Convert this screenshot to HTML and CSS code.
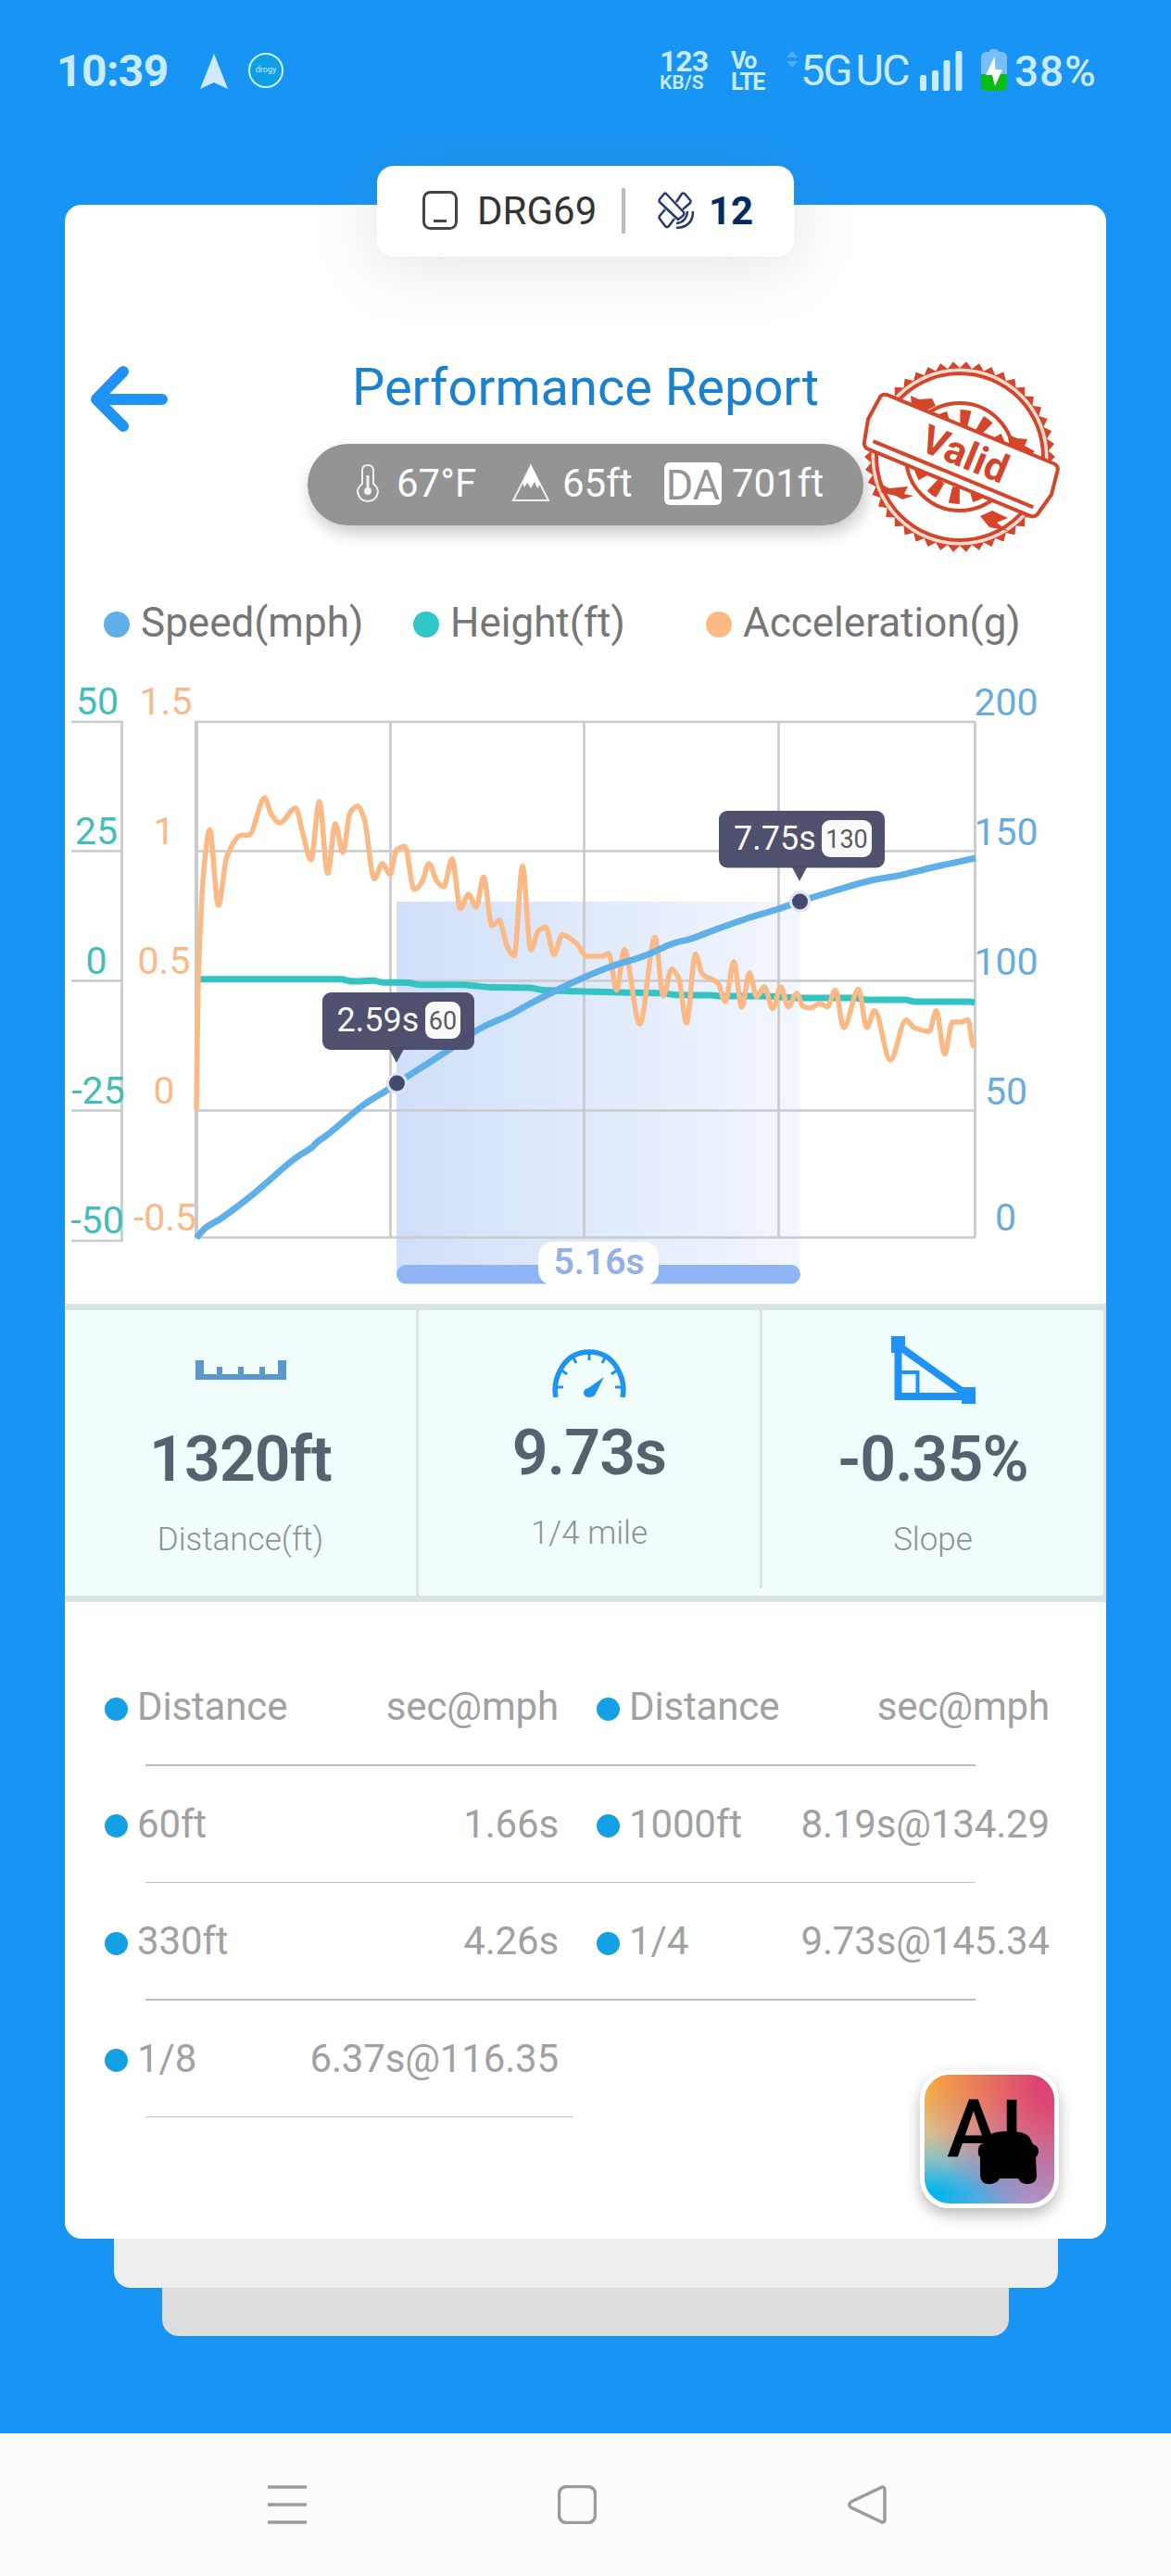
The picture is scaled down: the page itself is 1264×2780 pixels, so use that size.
FILE: index.html
```html
<!DOCTYPE html>
<html lang="en">
<head>
    <meta charset="UTF-8">
    <meta name="viewport" content="width=device-width, initial-scale=1.0">
    <title>Performance Report</title>
    <link rel="stylesheet" href="styles.css">
</head>
<body>
    <div class="status-bar">
        <span class="clock">10:39</span>
        <svg class="location" width="30" height="38" viewBox="0 0 30 38"><path d="M15 0L30 38L15 31L0 38Z" fill="#d2eafd"/></svg>
        <span class="app-badge">drogy</span>
        <span class="net-speed"><b>123</b><small>KB/S</small></span>
        <span class="volte"><b>Vo</b><b>LTE</b></span>
        <svg class="data-arrows" width="12" height="18" viewBox="0 0 12 18"><path d="M6 0L12 7H0ZM6 18L12 11H0Z" fill="#4fb0fa"/></svg>
        <span class="network">5G<span>UC</span></span>
        <svg class="signal" width="46" height="43" viewBox="0 0 46 43" fill="#c9ebff">
            <rect x="0" y="26" width="7" height="17" rx="2"/>
            <rect x="13" y="21" width="7" height="22" rx="2"/>
            <rect x="25.500" y="10" width="7" height="33" rx="2"/>
            <rect x="38.500" y="0" width="7" height="43" rx="2"/>
        </svg>
        <svg class="battery" width="28" height="45" viewBox="0 0 28 45">
            <path d="M9 3Q9 0 12 0H16Q19 0 19 3H22Q28 3 28 9V27H0V9Q0 3 6 3Z" fill="#78befb"/>
            <path d="M0 27H28V39Q28 45 22 45H6Q0 45 0 39Z" fill="#08bd16"/>
            <path d="M14.500 8L5 28H12L15 40L23 22H15.500Z" fill="#fff"/>
        </svg>
        <span class="percent">38%</span>
    </div>

    <main class="card">
        <div class="device">
            <svg width="38" height="42" viewBox="0 0 38 42" fill="none" stroke="#444" stroke-width="3">
                <rect x="1.500" y="1.500" width="35" height="39" rx="7"/>
                <path d="M12 32.500H26"/>
            </svg>
            <span class="device-name">DRG69</span>
            <i class="divider"></i>
            <svg width="39" height="40" viewBox="0 0 39 40" fill="none" stroke="#26396b" stroke-width="2.500" stroke-linejoin="round">
                <path d="M9 2L28 22Q29 24 27 26L22 30L2 11Q1 10 2 8L7 2Q8 1 9 2Z"/>
                <path d="M20 11L26 2Q27 1 29 2L35 9Q36 10 35 12L27 19"/>
                <path d="M8 19L2 26Q1 28 2 29L8 37Q10 39 12 37L18 29"/>
                <path d="M32 21Q31 33 20 34M38 21Q38 38 20 39"/>
            </svg>
            <span class="satellites">12</span>
        </div>

        <header class="head">
            <svg class="back" width="86" height="72" viewBox="0 0 86 72" fill="none" stroke="#1f93f5" stroke-width="12" stroke-linecap="round" stroke-linejoin="round">
                <path d="M37 6L8 36L37 65M8 36H79"/>
            </svg>
            <div class="head-center">
                <h1>Performance Report</h1>
                <div class="conditions">
                    <svg class="thermo" width="24" height="41" viewBox="0 0 24 41" fill="none" stroke="#f0f0f0" stroke-width="2">
                        <path d="M6 21V7Q6 1 12 1Q18 1 18 7V21Q23 25 23 30Q21 40 12 40Q3 40 1 30Q1 25 6 21Z"/>
                        <path d="M12 12V30" stroke-width="3"/>
                        <circle cx="12" cy="29" r="4" fill="#f0f0f0" stroke="none"/>
                    </svg>
                    <span class="temp">67°F</span>
                    <svg class="mountain" width="42" height="42" viewBox="0 0 42 42">
                        <path d="M21 3L40 40H2Z" fill="none" stroke="#f0f0f0" stroke-width="2"/>
                        <path d="M21 1L31 23L28 27L25 20L21 27L17 21L14 26L12 21Z" fill="#fff"/>
                    </svg>
                    <span class="altitude">65ft</span>
                    <span class="da">DA</span>
                    <span class="density">701ft</span>
                </div>
            </div>
            <svg class="stamp" width="214" height="210" viewBox="-106 -105 214 210">
                <polygon id="stampTeeth" fill="#d4452a"/>
                <circle r="94" fill="#fff" stroke="#fbd9cf" stroke-width="3"/>
                <circle r="90" fill="none" stroke="#d4452a" stroke-width="4"/>
                <circle r="58" fill="none" stroke="#d4452a" stroke-width="4"/>
                <circle r="42" fill="none" stroke="#d4452a" stroke-width="18" stroke-dasharray="10 12"/>
                <path d="M-53 -66L-44 -62L-30 -63L-26 -55L-36 -50L-52 -56ZM52 -24L62 -20L73 -19L70 -12L81 -6L70 3L54 -4ZM-88 28L-76 34L-56 32L-60 40L-50 42L-62 46L-69 42L-84 39ZM22 64L35 58L52 66L40 71L52 80L32 76Z" fill="#d4452a"/>
                <g transform="rotate(22.4)">
                    <path d="M-104 -28Q-102 -32 -96 -32H96Q101 -32 103 -28L107 0L101 26Q99 30 94 30H-94Q-99 30 -101 26L-107 0Z" fill="#fff" stroke="#d4452a" stroke-width="4"/>
                    <path d="M-93 20H94" stroke="#d4452a" stroke-width="4"/>
                    <text x="4" y="10" class="stamp-text">Valid</text>
                </g>
            </svg>
        </header>

        <div class="legend">
            <span class="speed">Speed(mph)</span>
            <span class="height">Height(ft)</span>
            <span class="accel">Acceleration(g)</span>
        </div>

        <svg class="chart" width="1124" height="710" viewBox="70 697 1124 710">
            <defs>
                <linearGradient id="range">
                    <stop offset="0" stop-color="#d0dff8"/>
                    <stop offset="1" stop-color="#f2f6ff"/>
                </linearGradient>
            </defs>
            <rect x="428" y="973" width="435.500" height="400" fill="url(#range)"/>
            <path class="grid" d="M77 779H133M77 918.500H131M77 1058.500H131M77 1198.500H131M77 1339H133M131.500 779V1339M210 779H1053M212 918.500H1052M212 1058.500H1052M212 1198.500H1052M210 1335.500H1053M421.500 779V1335M630.500 779V1335M840.500 779V1335M1052.500 779V1335"/>
            <path class="grid thick" d="M212 778V1336"/>
            <path id="heightLine" class="line" stroke="#34c3c3"/>
            <path id="accelLine" class="line thin" stroke="#fab985"/>
            <path id="speedLine" class="line" stroke="#5fafe9"/>

            <g class="ticks ticks-height">
                <text x="105" y="771">50</text>
                <text x="104" y="911">25</text>
                <text x="104" y="1051">0</text>
                <text x="106" y="1191">-25</text>
                <text x="105" y="1331">-50</text>
            </g>
            <g class="ticks ticks-accel">
                <text x="179" y="771">1.5</text>
                <text x="177" y="911">1</text>
                <text x="177" y="1051">0.5</text>
                <text x="177" y="1191">0</text>
                <text x="178" y="1328">-0.5</text>
            </g>
            <g class="ticks ticks-speed">
                <text x="1086" y="771.500">200</text>
                <text x="1086" y="911.500">150</text>
                <text x="1086" y="1052">100</text>
                <text x="1086" y="1192">50</text>
                <text x="1085.500" y="1328">0</text>
            </g>

            <rect x="428" y="1365" width="436" height="20.500" rx="10" fill="#8fb4f6"/>
            <rect x="581" y="1340" width="130" height="47" rx="16" fill="#fff"/>
            <text class="range-text" x="646.500" y="1374.500">5.16s</text>

            <g class="marker">
                <rect x="348" y="1071" width="164" height="62" rx="9"/>
                <path d="M419 1130H437L428 1147Z"/>
                <circle cx="428.500" cy="1169" r="10"/>
                <text class="marker-time" x="408" y="1113">2.59s</text>
                <rect class="marker-badge" x="459" y="1081" width="38" height="40" rx="9"/>
                <text class="marker-speed" x="478" y="1110.500">60</text>
            </g>
            <g class="marker">
                <rect x="776" y="875" width="179" height="61.500" rx="9"/>
                <path d="M854 934H872L863 951Z"/>
                <circle cx="863.500" cy="973" r="10"/>
                <text class="marker-time" x="836.500" y="917">7.75s</text>
                <rect class="marker-badge" x="887" y="885" width="54" height="40" rx="9"/>
                <text class="marker-speed" x="914" y="914.500">130</text>
            </g>
        </svg>

        <section class="stats">
            <div class="stat stat-distance">
                <svg width="98" height="21" viewBox="0 0 98 21"><path d="M0 0H9V15H23V7H29V15H46V7H52V15H69V7H75V15H89V0H98V21H0Z" fill="#5b97ce"/></svg>
                <strong>1320ft</strong>
                <span>Distance(ft)</span>
            </div>
            <div class="stat stat-time">
                <svg width="80" height="52" viewBox="0 0 80 52" fill="none" stroke="#1f93f0">
                    <path d="M4 52Q1 38 8 24Q18 3 40 3Q62 3 72 24Q79 38 76 52" stroke-width="5.500"/>
                    <path d="M5 41H12M9 22L16 27M22 8L26 15M40 3V12M58 8L54 15M71 22L64 27M75 41H68" stroke-width="3"/>
                    <path d="M56 30L46 50Q44 52 40 52Q34 52 34 47Q34 43 39 42Z" fill="#1f93f0" stroke="none"/>
                </svg>
                <strong>9.73s</strong>
                <span>1/4 mile</span>
            </div>
            <div class="stat stat-slope">
                <svg width="91" height="73" viewBox="0 0 91 73" fill="none" stroke="#1f93f5">
                    <path d="M7.500 10V65H84Z" stroke-width="8"/>
                    <path d="M8 39H28.500V65" stroke-width="4"/>
                    <path d="M0 0H15V18H0ZM76 55H91V73H76Z" fill="#1f93f5" stroke="none"/>
                </svg>
                <strong>-0.35%</strong>
                <span>Slope</span>
            </div>
        </section>

        <section class="splits">
            <div class="row">
                <div class="split"><span>Distance</span><span>sec@mph</span></div>
                <div class="split"><span>Distance</span><span>sec@mph</span></div>
            </div>
            <div class="row">
                <div class="split"><span>60ft</span><span>1.66s</span></div>
                <div class="split"><span>1000ft</span><span>8.19s@134.29</span></div>
            </div>
            <div class="row">
                <div class="split"><span>330ft</span><span>4.26s</span></div>
                <div class="split"><span>1/4</span><span>9.73s@145.34</span></div>
            </div>
            <div class="row half">
                <div class="split"><span>1/8</span><span>6.37s@116.35</span></div>
            </div>
        </section>

        <div class="ai-button">
            <svg width="140" height="140" viewBox="0 0 140 140">
                <text x="24" y="89" font-size="87" font-weight="500">AI</text>
                <path d="M58 81Q58 75 64 74L70 65Q75 61 91 61Q108 61 113 67L117 75Q123 77 123 82Q123 87 120 89L121 110Q120 118 111 118Q104 118 101 112H81Q78 118 69 118Q61 118 60 109V89Q57 86 58 81Z"/>
            </svg>
        </div>
    </main>
    <div class="sheet sheet-middle"></div>
    <div class="sheet sheet-last"></div>

    <nav class="nav-bar">
        <svg width="42" height="42" viewBox="0 0 42 42"><path d="M0 2H42M0 21H42M0 40H42"/></svg>
        <svg width="42" height="42" viewBox="0 0 42 42"><rect x="1.500" y="1.500" width="39" height="39" rx="8"/></svg>
        <svg width="42" height="42" viewBox="0 0 42 42"><path d="M36 2.500L3.500 18Q0 21 3.500 24L36 39.500Q40 41 40 37V5Q40 1 36 2.500Z"/></svg>
    </nav>
    <script src="chart.js"></script>
</body>
</html>
```
FILE: styles.css
```css
* {
    box-sizing: border-box;
}
body {
    margin: 0;
    min-height: 2780px;
    display: flex;
    flex-direction: column;
    align-items: center;
    background-color: #1894f5;
    font-family: Roboto, sans-serif;
}
svg {
    display: block;
    flex: none;
}

/* status bar */
.status-bar {
    width: 100%;
    height: 221px;
    padding: 50px 0 0 61px;
    display: flex;
    align-items: flex-start;
    color: #c9ebff;
    white-space: nowrap;
}
.clock {
    width: 155px;
    font-size: 48px;
    line-height: 53px;
    font-weight: 700;
    letter-spacing: -0.6px;
}
.location {
    margin-top: 8px;
}
.app-badge {
    width: 38px;
    height: 38px;
    margin: 7px 406px 0 22px;
    border: 2px solid #c9f5ff;
    border-radius: 50%;
    background-color: #0f9fe4;
    font-size: 9px;
    line-height: 33px;
    text-align: center;
}
.net-speed, .volte {
    display: flex;
    flex-direction: column;
}
.net-speed {
    width: 77px;
}
.net-speed b {
    font-size: 32px;
    line-height: 32px;
    font-weight: 700;
    letter-spacing: -1px;
}
.net-speed small {
    font-size: 21px;
    line-height: 15px;
    font-weight: 600;
}
.volte {
    width: 60px;
    padding-top: 4px;
}
.volte b {
    font-size: 25px;
    line-height: 23px;
    letter-spacing: -1.5px;
}
.data-arrows {
    margin-top: 5px;
}
.network {
    width: 132px;
    padding-left: 3px;
    font-size: 47px;
    line-height: 52px;
    letter-spacing: -2px;
}
.network span {
    margin-left: 5px;
}
.signal {
    margin-top: 5px;
}
.battery {
    margin: 3px 8px 0 20px;
}
.percent {
    font-size: 46px;
    line-height: 54px;
    font-weight: 500;
    letter-spacing: 0.8px;
}

/* report card */
.card {
    position: relative;
    width: 1124px;
    height: 2195px;
    background-color: #fff;
    border-radius: 18px;
}
.device {
    position: absolute;
    top: -42px;
    left: 337px;
    width: 450px;
    height: 98px;
    padding: 0 0 2px 49px;
    display: flex;
    align-items: center;
    background-color: #fff;
    border-radius: 18px;
    box-shadow: 0 8px 70px rgba(90, 110, 130, 0.2);
    font-size: 42px;
    color: #333;
}
.device-name {
    width: 154px;
    margin-left: 21px;
}
.divider {
    width: 4px;
    height: 49px;
    margin: 0 35px 0 2px;
    background-color: #bbb;
}
.satellites {
    margin-left: 16px;
    font-weight: 700;
    color: #042a62;
}
.head {
    height: 426px;
    padding-top: 164px;
    display: grid;
    grid-template-columns: 262px 600px 262px;
    align-items: start;
}
.back {
    margin: 10px 0 0 26px;
}
.stamp {
    margin: 3px 0 0 -2px;
    z-index: 1;
}
.stamp-text {
    font-size: 43px;
    font-weight: 700;
    fill: #d4452a;
    text-anchor: middle;
}
h1 {
    margin: 0 0 28px;
    font-size: 56px;
    line-height: 66px;
    font-weight: 400;
    text-align: center;
    color: #1a80d0;
}
.conditions {
    height: 88px;
    padding: 0 0 4px 53px;
    display: flex;
    align-items: center;
    background-color: #949494;
    border-radius: 44px;
    box-shadow: 3px 8px 18px rgba(0, 0, 0, 0.22);
    font-size: 42px;
    color: #fff;
}
.temp {
    width: 124px;
    margin-left: 19px;
}
.altitude {
    width: 110px;
    margin-left: 13px;
}
.da {
    width: 62px;
    height: 46px;
    margin-top: 2px;
    border-radius: 6px;
    background-color: #fff;
    color: #949494;
    font-size: 45px;
    line-height: 50px;
    text-align: center;
}
.density {
    margin-left: 11px;
}

.legend {
    height: 50px;
    padding-left: 42px;
    display: grid;
    grid-template-columns: 334px 316px auto;
    font-size: 44px;
    line-height: 50px;
    color: #767676;
}
.legend span {
    display: flex;
    align-items: center;
    gap: 12px;
}
.legend span::before {
    content: "";
    width: 28px;
    height: 28px;
    margin-top: 3px;
    border-radius: 50%;
    background-color: #5fafe9;
}
.legend .height::before {
    background-color: #2fc7c7;
}
.legend .accel::before {
    background-color: #fdb884;
}

/* chart */
.grid {
    fill: none;
    stroke: #c9cacb;
    stroke-width: 2.7;
}
.grid.thick {
    stroke-width: 4;
}
.line {
    fill: none;
    stroke-width: 7;
    stroke-linejoin: round;
}
.line.thin {
    stroke-width: 5.5;
}
.ticks text {
    font-size: 41px;
    text-anchor: middle;
}
.ticks-height {
    fill: #43bdb8;
}
.ticks-accel {
    fill: #f8ba88;
}
.ticks-speed {
    fill: #68acdd;
}
.range-text {
    font-size: 39px;
    font-weight: 600;
    text-anchor: middle;
    fill: #92b0ea;
}
.marker {
    fill: #4a4a6a;
    fill-opacity: 0.97;
}
.marker circle {
    fill: #41456b;
    stroke: #dfe4f0;
    stroke-width: 3;
}
.marker text {
    text-anchor: middle;
}
.marker .marker-time {
    font-size: 36px;
    fill: #fff;
}
.marker .marker-badge {
    fill: #fff;
}
.marker .marker-speed {
    font-size: 27px;
    fill: #555;
}

/* summary */
.stats {
    height: 322px;
    display: grid;
    grid-template-columns: 382px 371px 371px;
    background-color: #f1fdfd;
    border: solid #dae4e3;
    border-width: 7px 0;
}
.stat {
    display: flex;
    flex-direction: column;
    align-items: center;
    border-right: 3px solid #dae4e3;
}
.stat strong {
    margin-bottom: 26px;
    font-size: 68px;
    line-height: 80px;
    font-weight: 600;
    letter-spacing: -0.9px;
    color: #556270;
}
.stat span {
    font-size: 35px;
    line-height: 42px;
    font-weight: 300;
    color: #8c9292;
}
.stat-distance {
    padding-top: 54px;
}
.stat-distance svg {
    margin-bottom: 46px;
}
.stat-time {
    padding-top: 42px;
    margin-bottom: 8px;
}
.stat-slope {
    padding-top: 28px;
}
.stat-time svg, .stat-slope svg {
    margin-bottom: 20px;
}

/* split times */
.splits {
    padding-top: 50px;
    font-size: 42px;
    line-height: 50px;
    letter-spacing: -0.15px;
    color: #a1a1a1;
}
.row {
    height: 126.5px;
    padding: 38px 0 0 43px;
    display: grid;
    grid-template-columns: 490px 489px;
    grid-template-rows: 50px 1.5px;
    gap: 37px 41px;
}
.row::after {
    content: "";
    grid-row: 2;
    grid-column: 1 / 3;
    width: 896px;
    margin-left: 44px;
    background-color: #bdbdbd;
}
.row.half::after {
    width: 461px;
}
.split {
    display: flex;
    align-items: center;
}
.split::before {
    content: "";
    width: 25px;
    height: 25px;
    margin: 4px 10px 0 0;
    border-radius: 50%;
    background-color: #14a0e5;
}
.split span:last-child {
    margin-left: auto;
}

.ai-button {
    position: absolute;
    right: 51px;
    bottom: 33px;
    width: 150px;
    height: 149px;
    border: 5px solid #fff;
    border-radius: 32px;
    background:
        radial-gradient(circle at 100% 10%, #dc4573 12%, rgba(220, 69, 115, 0) 75%),
        radial-gradient(circle at 105% 105%, #a3a2d6 20%, rgba(163, 162, 214, 0) 65%),
        linear-gradient(#f8b03f 12%, #d8c08e 45%, #8dbfc4 65%, #00b5ee 88%);
    background-origin: border-box;
    box-shadow: 0 7px 16px rgba(0, 0, 0, 0.28);
}

.sheet {
    border-radius: 0 0 18px 18px;
}
.sheet-middle {
    width: 1019px;
    height: 53px;
    background-color: #eee;
}
.sheet-last {
    width: 914px;
    height: 52px;
    background-color: #ddd;
}

.nav-bar {
    width: 100%;
    height: 154px;
    margin-top: auto;
    padding: 56px 0 0 289px;
    display: flex;
    gap: 271px;
    background-color: #fcfcfc;
}
.nav-bar svg {
    fill: none;
    stroke: #9b9b9b;
    stroke-width: 3.5;
}
```
FILE: chart.js
```js
const speed = [
    [212, 1336], [222, 1325], [237, 1316], [273, 1289], [320, 1249], [337, 1238], [343, 1232], [353, 1225],
    [393, 1192], [420, 1175], [428, 1169], [440, 1161.5], [483, 1134], [520, 1109], [553, 1094], [567, 1086],
    [600, 1069], [630, 1055], [657, 1044], [697, 1031], [730, 1017], [743, 1014], [773, 1003], [807, 991],
    [840, 981], [863, 973], [900, 961.5], [943, 949.5], [967, 945.5], [1007, 936], [1053, 926]
];
const height = [
    [212, 1056.7], [368, 1056.7], [380, 1059], [403, 1058.3], [413, 1060.2], [440, 1060.5], [453, 1062.7],
    [498, 1062.7], [530, 1065.6], [572, 1066], [587, 1068.6], [622, 1069.7], [670, 1071], [717, 1072],
    [730, 1073.8], [768, 1074], [777, 1075], [823, 1075], [863, 1077], [923, 1077], [935, 1079], [978, 1079],
    [987, 1081], [1047, 1081], [1052, 1082]
];
const accel = [
    [212, 1198], [214, 1058], [220.7, 932], [226.3, 895.5], [235.7, 977], [245, 924], [260, 901.6], [269, 901],
    [285.7, 861], [293, 879], [302, 888], [319, 872], [327, 900], [335.7, 928], [344.7, 865], [353.7, 942.5],
    [362, 889], [370, 920], [378, 877], [385.7, 870], [393, 883], [404, 948.5], [412.7, 932], [421, 943.7],
    [428, 917], [437, 913.5], [447, 960], [455, 953], [463, 932], [471.7, 951], [479, 957], [488, 927],
    [497, 980.5], [505.7, 965], [514, 979], [522, 946.5], [531, 999], [539, 993], [547, 1020], [555, 1031.6],
    [564, 934.7], [573, 1025], [581, 1005], [589, 1000.5], [598, 1030], [607, 1008.7], [622, 1018], [633, 1032],
    [650, 1032], [657, 1029], [665.7, 1068.6], [673.7, 1024.6], [690.7, 1105], [707, 1011.6], [716, 1075],
    [725, 1045.7], [733, 1057], [741, 1104], [750.7, 1029.8], [758, 1051], [775, 1061], [783, 1081], [792, 1038],
    [800.7, 1087], [809, 1050], [816.7, 1075.6], [825, 1064.7], [834, 1088.6], [842.7, 1065], [851, 1086.4],
    [860, 1072], [866.7, 1086], [875, 1087.7], [885, 1083], [893, 1086.4], [901.7, 1068.6], [910.7, 1109],
    [926.7, 1067.8], [935.7, 1109], [944, 1090.8], [961, 1144], [978, 1100.7], [986.7, 1109], [1003, 1113],
    [1010.7, 1090.8], [1019.7, 1137.6], [1028, 1103], [1037, 1103], [1045, 1100.7], [1050, 1127.6], [1052, 1130]
];

// monotone curve, so peaks do not overshoot
function smoothPath(points) {
    const slopes = points.map((p, i) => {
        if (i === 0 || i === points.length - 1) return null;
        const a = points[i - 1];
        const b = points[i + 1];
        const left = (p[1] - a[1]) / (p[0] - a[0]);
        const right = (b[1] - p[1]) / (b[0] - p[0]);
        return left * right <= 0 ? 0 : 2 * left * right / (left + right);
    });
    let d = `M${points[0]}`;
    for (let i = 1; i < points.length; i++) {
        const [x0, y0] = points[i - 1];
        const [x1, y1] = points[i];
        const step = (x1 - x0) / 3;
        const line = (y1 - y0) / (x1 - x0);
        const m0 = slopes[i - 1] === null ? line : slopes[i - 1];
        const m1 = slopes[i] === null ? line : slopes[i];
        d += `C${x0 + step},${y0 + m0 * step} ${x1 - step},${y1 - m1 * step} ${x1},${y1}`;
    }
    return d;
}

document.getElementById('speedLine').setAttribute('d', smoothPath(speed));
document.getElementById('heightLine').setAttribute('d', smoothPath(height));
document.getElementById('accelLine').setAttribute('d', smoothPath(accel));

// jagged edge of the stamp
const teeth = [];
for (let i = 0; i < 92; i++) {
    const angle = i * Math.PI / 46;
    const r = i % 2 ? 96 : 103;
    teeth.push(`${r * Math.cos(angle)},${r * Math.sin(angle)}`);
}
document.getElementById('stampTeeth').setAttribute('points', teeth.join(' '));
```
